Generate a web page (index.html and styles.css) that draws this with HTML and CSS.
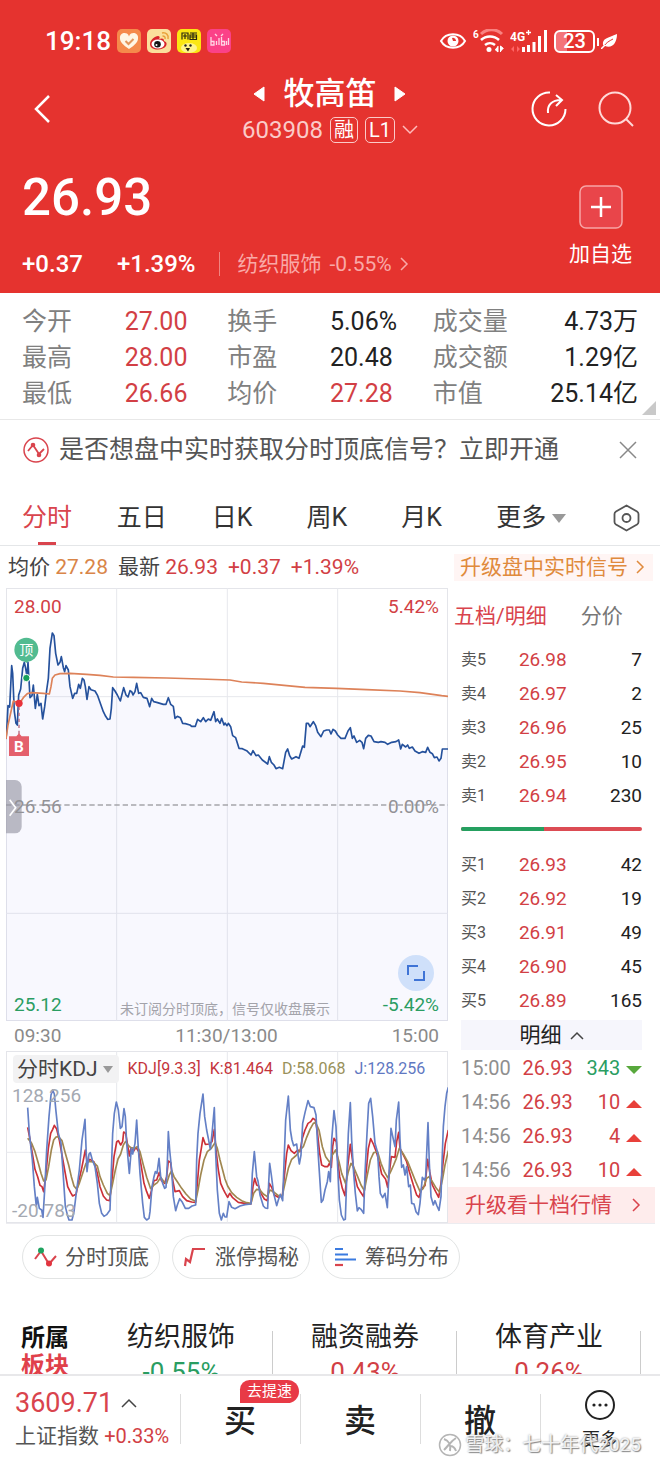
FILE: index.html
```html
<!DOCTYPE html>
<html lang="zh-CN">
<head>
    <meta charset="UTF-8">
    <meta name="viewport" content="width=device-width, initial-scale=1.0">
    <title>牧高笛 603908</title>
    <link rel="stylesheet" href="styles.css">
</head>
<body>
    <header class="top">
        <div class="status">
            <span class="clock">19:18</span>
            <svg class="app" viewBox="0 0 24 24"><rect width="24" height="24" rx="5" fill="#f58a4b"/><path d="M12 20C6 16 3 13 3 9.500a4.500 4.500 0 0 1 9-2 4.500 4.500 0 0 1 9 2C21 13 18 16 12 20z" fill="#fff6e4"/><path d="M8.500 12l3 3 5-5" fill="none" stroke="#e2965c" stroke-width="2"/></svg>
            <svg class="app" viewBox="0 0 24 24"><rect width="24" height="24" rx="5" fill="#fbdf9c"/><path d="M3 15c0-4 5-8 8-8 2 0 2 2 1 3 3-1 5-1 5 2 3 1 3 3 2 5-3 5-16 5-16-2z" fill="#d8232a"/><ellipse cx="11" cy="15" rx="6.500" ry="4.500" fill="#fff"/><circle cx="10.500" cy="15.300" r="3.300" fill="#161616"/><circle cx="9.500" cy="16" r="1" fill="#fff"/><path d="M15 4c4-1 7 2 6 6M15.500 7c2 0 3 1 2.500 3" fill="none" stroke="#e9a23c" stroke-width="1.500"/></svg>
            <svg class="app" viewBox="0 0 24 24"><rect width="24" height="24" rx="5" fill="#fbe713"/><ellipse cx="12" cy="19" rx="8" ry="5" fill="#fff48a"/><path d="M5 10.500V4h6v6.500M8 5v5M6 7h4M13 4h7M13 6h6.500v4.500H13zM16 4v6M13 8h6" fill="none" stroke="#2c2a12" stroke-width="1.200"/><circle cx="8.500" cy="16.500" r="1.200" fill="#222"/><circle cx="13.500" cy="16.500" r="1.200" fill="#222"/><path d="M8.500 19h4.500l-2 3.500z" fill="#221c10"/></svg>
            <svg class="app" viewBox="0 0 24 24"><rect width="24" height="24" rx="5" fill="#fb4188"/><path d="M4 8v8h3v-3.500H4M9.500 12v4M12 9v7M14.500 8v8h3v-3.500h-3M19.500 12v4M21.500 9v7M8 5l2 2M16 5l-2 2" fill="none" stroke="#ffd5e4" stroke-width="1.300"/></svg>
            <span class="status-gap"></span>
            <svg width="28" height="20" viewBox="0 0 28 20"><path d="M2 10C7 1 21 1 26 10 21 19 7 19 2 10z" fill="none" stroke="#fff" stroke-width="2"/><circle cx="14" cy="10" r="5.500" fill="#fff"/><path d="M13 7a3 3 0 0 1 4 3h-3z" fill="#e5332f"/></svg>
            <svg width="31" height="24" viewBox="0 0 31 24"><text x="0" y="9" class="tiny">6</text><path d="M8 5a15 15 0 0 1 21 0" fill="none" stroke="#f98280" stroke-width="3"/><path d="M8 11a13 13 0 0 1 18 0M12 16a8 8 0 0 1 10 0" fill="none" stroke="#fff" stroke-width="2.500"/><circle cx="16" cy="20.500" r="2.500" fill="#fff"/><path d="M25 17v6l-3-2.500M27.500 23v-6l3 2.500" fill="#fff" stroke="#fff"/></svg>
            <svg width="38" height="24" viewBox="0 0 38 24"><text x="0" y="12" class="net">4G</text><path d="M18.500 1v5M16 3.500h5" stroke="#fff" stroke-width="1.300"/><path d="M4 17v6l-3-3zM7 17v6l3-3z" fill="#f66"/><path d="M13.500 23v-5M18.500 23v-7M24 23v-10M29.500 23V7M35.500 23V1" stroke="#fff" stroke-width="3"/></svg>
            <span class="battery">23</span>
            <svg width="17" height="16" viewBox="0 0 17 16"><path d="M2 12C1 5 7 5 16 1c0 9-5 15-12 12z" fill="#fff"/><path d="M3 13C5 10 8 8 12 6" stroke="#e5332f" fill="none"/><path d="M0 16l4-4" stroke="#fff" stroke-width="1.500"/></svg>
        </div>

        <nav class="nav">
            <button class="icon-btn back" type="button" aria-label="返回"><svg width="18" height="30" viewBox="0 0 18 30"><path d="M16 2L3 15l13 13" fill="none" stroke="#fff" stroke-width="2.500"/></svg></button>
            <div class="stock">
                <h1 class="stock-name">
                    <svg width="12" height="16" viewBox="0 0 12 16"><path d="M11 1v14L1 8z" fill="#fff" stroke="#fff" stroke-linejoin="round"/></svg>
                    牧高笛
                    <svg width="12" height="16" viewBox="0 0 12 16"><path d="M1 1v14l10-7z" fill="#fff" stroke="#fff" stroke-linejoin="round"/></svg>
                </h1>
                <div class="stock-code">
                    603908
                    <span class="mark">融</span>
                    <span class="mark">L1</span>
                    <svg width="16" height="10" viewBox="0 0 16 10"><path d="M1 1l7 7 7-7" fill="none" stroke="#fbb" stroke-width="1.500"/></svg>
                </div>
            </div>
            <div class="nav-actions">
                <button class="icon-btn" type="button" aria-label="分享"><svg width="38" height="38" viewBox="0 0 38 38"><path d="M20 2.500A16.500 16.500 0 1 0 35.500 19" fill="none" stroke="#fff" stroke-width="2"/><path d="M18 23c-1-8 4-13 13-13M26 5l6 5-6 6" fill="none" stroke="#fff" stroke-width="2"/></svg></button>
                <button class="icon-btn" type="button" aria-label="搜索"><svg width="38" height="38" viewBox="0 0 38 38"><circle cx="18" cy="18" r="15.500" fill="none" stroke="#ffd9d8" stroke-width="2"/><path d="M29 29l7 7" stroke="#ffd9d8" stroke-width="2"/></svg></button>
            </div>
        </nav>

        <section class="quote">
            <div>
                <div class="price">26.93</div>
                <div class="change">
                    <span>+0.37</span>
                    <span class="change-rate">+1.39%</span>
                    <a class="industry" href="#">纺织服饰 <span class="industry-rate">-0.55%</span><svg width="9" height="14" viewBox="0 0 9 14"><path d="M1 1l6 6-6 6" fill="none" stroke="#f9a9a7" stroke-width="1.500"/></svg></a>
                </div>
            </div>
            <button class="add" type="button">
                <svg width="44" height="44" viewBox="0 0 44 44"><rect x="1" y="1" width="42" height="42" rx="6" fill="#e9454a" stroke="#f7a5a6" stroke-width="1.500"/><path d="M22 12v20M12 22h20" stroke="#fff" stroke-width="2.500"/></svg>
                加自选
            </button>
        </section>
    </header>

    <section class="stats">
        <table class="stats-table">
            <tr><th>今开</th><td class="up">27.00</td><th>换手</th><td>5.06%</td><th>成交量</th><td class="right">4.73万</td></tr>
            <tr><th>最高</th><td class="up">28.00</td><th>市盈</th><td>20.48</td><th>成交额</th><td class="right">1.29亿</td></tr>
            <tr><th>最低</th><td class="up">26.66</td><th>均价</th><td class="up">27.28</td><th>市值</th><td class="right">25.14亿</td></tr>
        </table>
        <svg class="corner" width="14" height="14" viewBox="0 0 14 14"><path d="M14 0v14H0z" fill="#c9c9c9"/></svg>
    </section>

    <section class="notice">
        <svg width="26" height="26" viewBox="0 0 26 26"><circle cx="13" cy="13" r="12" fill="none" stroke="#d9444d" stroke-width="1.500"/><path d="M5 14l5-6 6 9 5-5" fill="none" stroke="#d9444d" stroke-width="1.800"/><circle cx="10" cy="8" r="2.300" fill="#d9444d"/><circle cx="16" cy="18" r="2.300" fill="#d9444d"/></svg>
        <a class="notice-text" href="#">是否想盘中实时获取分时顶底信号？立即开通</a>
        <button class="icon-btn" type="button" aria-label="关闭"><svg width="18" height="18" viewBox="0 0 18 18"><path d="M1 1l16 16M17 1L1 17" stroke="#888" stroke-width="1.500"/></svg></button>
    </section>

    <nav class="tabs">
        <button class="tab active" type="button">分时</button>
        <button class="tab" type="button">五日</button>
        <button class="tab" type="button">日K</button>
        <button class="tab" type="button">周K</button>
        <button class="tab" type="button">月K</button>
        <button class="tab" type="button">更多 <svg width="14" height="9" viewBox="0 0 14 9"><path d="M0 0h14L7 9z" fill="#999"/></svg></button>
        <button class="tab" type="button" aria-label="设置"><svg width="27" height="28" viewBox="0 0 27 28"><path d="M13.500 1.500L24 7.500q1.500 1 1.500 2.500v8q0 1.500-1.500 2.500l-10.500 6L3 20.500Q1.500 19.500 1.500 18v-8Q1.500 8.500 3 7.500z" fill="none" stroke="#555" stroke-width="1.800"/><circle cx="13.500" cy="14" r="4" fill="none" stroke="#555" stroke-width="1.800"/></svg></button>
    </nav>

    <div class="summary">
        <span>均价 <b class="avg">27.28</b></span>
        <span>最新 <b class="up">26.93</b></span>
        <b class="up">+0.37</b>
        <b class="up">+1.39%</b>
        <a class="upgrade" href="#">升级盘中实时信号<svg width="9" height="14" viewBox="0 0 9 14"><path d="M1 1l6 6-6 6" fill="none" stroke="#e08a3c" stroke-width="1.500"/></svg></a>
    </div>

    <main class="market">
        <div class="charts">
            <div class="chart">
                <svg class="plot" viewBox="18 129 1326 1299">
                    <path class="grid" d="M350 129V1428M682 129V1428M1013 129V1428M18 455H1344M18 1105H1344"/>
                    <polyline class="line-price" points="10,1440 10,582 18,580 20,560 24,482 29,486 35,362 38,385 43,500 48,535 52,540 56,450 62,432 68,370 73,352 77,370 81,395 84,352 90,458 96,452 100,420 106,490 112,448 117,482 123,475 128,522 134,485 140,435 145,400 150,310 157,264 162,272 167,325 174,360 180,352 184,335 190,368 194,380 198,362 205,375 210,425 218,460 224,445 230,445 236,418 241,430 247,400 252,405 256,425 261,463 267,425 273,434 285,438 293,452 302,478 310,500 317,514 323,523 330,522 334,490 338,428 345,438 352,450 361,468 371,428 378,450 384,456 390,437 395,440 399,450 405,440 410,415 416,445 422,443 430,457 441,460 449,485 455,460 461,470 470,472 480,475 490,478 498,478 505,458 512,478 520,484 525,520 532,514 541,518 548,535 556,536 570,540 575,544 586,544 593,523 602,530 610,518 617,530 625,522 632,526 642,500 647,530 652,522 660,535 665,520 672,540 675,534 681,542 685,535 692,545 698,572 707,578 717,610 727,611 740,617 753,630 759,617 768,632 775,630 787,645 803,657 808,635 814,652 822,660 828,671 838,667 848,671 857,622 863,612 869,632 875,642 888,635 897,640 908,603 913,607 919,535 925,535 930,545 940,530 947,542 953,562 963,575 971,558 980,555 988,555 993,567 999,553 1006,558 1013,570 1023,580 1035,580 1044,558 1051,548 1057,580 1062,573 1070,592 1079,586 1086,592 1091,611 1097,580 1105,571 1113,573 1122,590 1135,592 1143,590 1155,592 1163,598 1175,592 1188,590 1196,585 1202,612 1207,598 1217,606 1223,600 1228,610 1237,606 1245,618 1257,625 1267,620 1277,622 1283,607 1290,622 1297,626 1303,638 1311,636 1317,648 1323,640 1327,612 1352,612 1352,1440"/>
                    <polyline class="line-avg" points="18,582 24,540 34,495 40,468 50,472 62,470 70,458 82,446 95,443 130,445 148,447 153,425 157,400 165,390 180,386 210,385 260,388 300,391 340,396 400,397 500,399 600,402 690,405 725,411 790,415 860,422 915,427 1010,430 1100,434 1200,438 1260,443 1325,452 1344,454"/>
                    <path class="base" d="M18 780H1344"/>
                    <path d="M57 485V570" stroke="#b66a80" stroke-width="4" stroke-dasharray="10 8"/>
                    <circle cx="57" cy="475" r="11" fill="#e8333b"/>
                    <circle cx="79" cy="399" r="11" fill="#17a05b" stroke="#fff" stroke-width="3"/>
                    <path d="M66 342h26l-13 12z" fill="#52bb90"/>
                    <circle cx="79" cy="314" r="36" fill="#52bb90"/>
                    <text x="79" y="329" class="top-mark">顶</text>
                    <path d="M27 574h22l8-9 8 9h22v59H27z" fill="#e4606c"/>
                    <text x="57" y="620" class="buy-mark">B</text>
                    <rect x="0" y="705" width="65" height="160" rx="20" fill="#9797a5" fill-opacity=".65"/>
                    <path d="M29 764l18 24-18 24" fill="none" stroke="#fff" stroke-width="5"/>
                </svg>
                <span class="tag tl up">28.00</span>
                <span class="tag tr up">5.42%</span>
                <span class="tag ml">26.56</span>
                <span class="tag mr">0.00%</span>
                <span class="tag bl down">25.12</span>
                <span class="tag br down">-5.42%</span>
                <span class="tag hint">未订阅分时顶底，信号仅收盘展示</span>
                <button class="expand" type="button" aria-label="全屏"><svg width="36" height="36" viewBox="0 0 36 36"><circle cx="18" cy="18" r="18" fill="#cfe0fa"/><path d="M10 20v-9h10M26 16v9H16" fill="none" stroke="#3f74d6" stroke-width="2"/></svg></button>
            </div>

            <div class="axis"><span>09:30</span><span>11:30/13:00</span><span>15:00</span></div>

            <div class="chart kdj">
                <svg class="plot" viewBox="18 -87 1326 516">
                    <path class="grid" d="M350 -87V429M682 -87V429M1013 -87V429M18 217H1344"/>
                    <polyline class="line-k" points="83,142 90,178 97,220 105,268 113,290 120,316 126,320 131,335 137,290 145,205 152,160 158,148 163,136 170,147 178,180 186,225 194,270 203,320 212,338 218,348 228,343 236,305 245,265 256,210 262,248 270,238 282,246 292,280 300,320 310,348 320,360 329,362 336,300 342,230 350,186 355,182 362,195 368,185 371,156 377,160 382,190 388,228 393,203 400,215 408,202 416,215 424,260 432,310 440,335 448,355 455,330 462,302 470,300 478,277 484,302 494,310 500,290 505,243 512,248 518,300 525,335 538,332 548,350 560,362 575,366 587,367 592,310 598,240 604,205 609,173 616,193 628,192 636,185 643,148 648,210 655,270 662,310 670,328 675,338 683,352 689,340 697,352 715,367 735,370 753,372 759,320 764,295 770,315 776,318 783,340 793,357 802,362 808,310 815,322 823,345 835,352 847,348 855,270 860,220 865,195 873,212 883,220 893,210 900,215 907,175 915,150 924,130 932,125 939,115 946,120 952,155 959,220 965,255 975,260 983,260 988,250 994,262 998,200 1002,175 1009,185 1013,240 1019,290 1027,325 1035,347 1043,260 1051,193 1056,230 1063,280 1072,320 1082,337 1091,350 1099,270 1105,205 1112,176 1120,192 1130,218 1137,245 1145,282 1157,298 1163,322 1169,270 1174,230 1185,232 1190,185 1196,157 1200,205 1210,225 1220,245 1228,275 1240,315 1250,345 1257,352 1265,325 1275,317 1283,238 1289,275 1297,315 1307,335 1316,352 1323,310 1329,250 1336,190 1345,150"/>
                    <polyline class="line-d" points="83,175 95,190 105,215 115,250 123,280 131,303 138,300 146,260 154,210 161,180 168,171 175,170 186,182 196,220 206,255 214,290 222,318 230,328 238,310 248,280 258,250 266,244 280,246 292,258 300,290 310,315 322,340 330,347 338,310 346,270 354,237 362,222 370,195 377,184 384,195 392,203 404,205 412,200 420,215 430,255 440,292 452,326 462,315 472,308 482,292 492,305 500,310 508,285 515,272 522,290 532,305 545,325 558,342 572,357 587,364 594,330 602,285 612,240 622,215 634,205 645,188 652,205 660,240 675,297 683,318 695,338 710,352 725,362 740,368 753,370 761,340 770,328 780,330 790,342 802,350 810,330 820,335 835,347 847,347 855,310 865,265 875,238 890,225 900,210 910,200 920,172 930,148 940,130 947,128 957,150 967,200 977,230 990,248 997,225 1007,210 1017,245 1025,280 1037,311 1045,275 1053,250 1061,262 1073,290 1083,315 1093,332 1101,290 1111,240 1121,218 1133,216 1143,250 1153,275 1163,293 1172,275 1181,255 1189,235 1198,205 1210,222 1223,245 1235,275 1247,305 1260,334 1270,325 1280,295 1287,290 1297,305 1309,325 1319,337 1327,300 1335,255 1345,212"/>
                    <polyline class="line-j" points="83,83 88,160 97,240 103,320 109,380 112,352 118,385 125,390 129,412 134,330 140,210 147,110 153,45 158,30 163,42 168,95 175,160 183,190 190,290 196,380 203,408 207,420 216,420 222,395 230,330 238,270 246,180 255,118 258,200 261,275 267,222 271,218 277,240 285,260 292,310 298,370 305,400 312,409 320,404 330,390 333,300 338,160 343,100 349,66 355,90 361,145 366,140 372,86 376,110 380,190 388,280 394,205 398,222 405,190 410,120 414,190 420,280 428,370 433,412 440,420 447,415 450,395 456,320 462,290 466,275 471,280 477,235 482,290 488,310 494,325 498,322 502,250 505,155 509,210 515,270 520,350 527,392 532,375 539,356 546,365 556,385 566,385 576,378 587,375 590,240 594,160 600,100 609,42 614,110 620,150 625,175 631,208 637,150 643,83 647,220 652,330 658,400 664,420 670,400 675,411 680,411 687,365 695,382 705,386 720,378 735,374 753,372 757,280 763,215 770,290 774,303 780,345 790,378 796,384 803,385 806,310 809,250 814,285 821,340 830,377 835,360 841,343 848,362 852,250 857,120 865,48 871,150 876,180 881,197 890,192 894,225 898,252 903,225 908,130 915,98 924,62 931,80 942,83 948,105 952,180 957,260 964,367 969,360 975,330 982,305 986,275 991,305 995,180 1002,92 1008,140 1013,260 1018,360 1024,405 1031,420 1036,418 1040,300 1045,160 1051,68 1055,180 1061,280 1066,340 1072,393 1077,383 1083,388 1091,400 1095,280 1101,160 1106,70 1112,55 1118,110 1125,190 1133,218 1137,290 1141,340 1148,353 1155,340 1162,383 1167,280 1173,145 1180,178 1185,200 1189,120 1196,66 1200,180 1205,262 1210,255 1215,285 1220,260 1226,320 1231,315 1235,370 1242,372 1248,395 1255,404 1260,370 1267,292 1273,300 1277,290 1284,128 1288,250 1293,350 1300,375 1305,362 1311,378 1317,391 1323,350 1326,250 1330,140 1335,80 1340,40 1345,22"/>
                </svg>
                <div class="kdj-bar">
                    <button class="kdj-select" type="button">分时KDJ <svg width="10" height="7" viewBox="0 0 10 7"><path d="M0 0h10L5 7z" fill="#999"/></svg></button>
                    <span class="k">KDJ[9.3.3]</span>
                    <span class="k">K:81.464</span>
                    <span class="d">D:58.068</span>
                    <span class="j">J:128.256</span>
                </div>
                <span class="tag kdj-max">128.256</span>
                <span class="tag kdj-min">-20.783</span>
            </div>
        </div>

        <aside class="book">
            <div class="book-tabs">
                <button class="book-tab active" type="button">五档/明细</button>
                <button class="book-tab" type="button">分价</button>
            </div>
            <table class="levels">
                <tr><th>卖5</th><td class="up">26.98</td><td>7</td></tr>
                <tr><th>卖4</th><td class="up">26.97</td><td>2</td></tr>
                <tr><th>卖3</th><td class="up">26.96</td><td>25</td></tr>
                <tr><th>卖2</th><td class="up">26.95</td><td>10</td></tr>
                <tr><th>卖1</th><td class="up">26.94</td><td>230</td></tr>
            </table>
            <div class="ratio"><span class="ratio-buy" style="width: 46%"></span></div>
            <table class="levels">
                <tr><th>买1</th><td class="up">26.93</td><td>42</td></tr>
                <tr><th>买2</th><td class="up">26.92</td><td>19</td></tr>
                <tr><th>买3</th><td class="up">26.91</td><td>49</td></tr>
                <tr><th>买4</th><td class="up">26.90</td><td>45</td></tr>
                <tr><th>买5</th><td class="up">26.89</td><td>165</td></tr>
            </table>
            <button class="detail" type="button">明细 <svg width="14" height="9" viewBox="0 0 14 9"><path d="M1 8l6-6 6 6" fill="none" stroke="#444" stroke-width="1.500"/></svg></button>
            <table class="trades">
                <tr><th>15:00</th><td class="up">26.93</td><td class="down">343</td><td><svg width="16" height="8" viewBox="0 0 16 8"><path d="M0 0h16L8 8z" fill="#58a83c"/></svg></td></tr>
                <tr><th>14:56</th><td class="up">26.93</td><td class="up">10</td><td><svg width="16" height="8" viewBox="0 0 16 8"><path d="M0 8h16L8 0z" fill="#e8403a"/></svg></td></tr>
                <tr><th>14:56</th><td class="up">26.93</td><td class="up">4</td><td><svg width="16" height="8" viewBox="0 0 16 8"><path d="M0 8h16L8 0z" fill="#e8403a"/></svg></td></tr>
                <tr><th>14:56</th><td class="up">26.93</td><td class="up">10</td><td><svg width="16" height="8" viewBox="0 0 16 8"><path d="M0 8h16L8 0z" fill="#e8403a"/></svg></td></tr>
            </table>
            <a class="more-levels" href="#">升级看十档行情 <svg width="9" height="14" viewBox="0 0 9 14"><path d="M1 1l6 6-6 6" fill="none" stroke="#d9444d" stroke-width="1.500"/></svg></a>
        </aside>
    </main>

    <div class="tools">
        <button class="tool" type="button"><svg width="24" height="22" viewBox="0 0 24 22"><path d="M2 13l6-8" stroke="#d9444d" stroke-width="2"/><path d="M8 5l8 13 7-8" fill="none" stroke="#d9444d" stroke-width="2"/><circle cx="8" cy="4.500" r="3" fill="#1fa35f"/><circle cx="16" cy="17.500" r="3" fill="#e2343f"/></svg>分时顶底</button>
        <button class="tool" type="button"><svg width="24" height="22" viewBox="0 0 24 22"><path d="M2 20l1-7 4 3 3-13h12" fill="none" stroke="#d9444d" stroke-width="2.200"/></svg>涨停揭秘</button>
        <button class="tool" type="button"><svg width="24" height="22" viewBox="0 0 24 22"><path d="M2 3h8M2 8.500h13M2 13.500h21" stroke="#3b7be0" stroke-width="2.200"/><path d="M2 19h8" stroke="#d9444d" stroke-width="2.200"/></svg>筹码分布</button>
    </div>

    <section class="sectors">
        <h2 class="sectors-title">所属<br><span class="sectors-sub">板块</span></h2>
        <a class="sector" href="#">纺织服饰<span class="sector-rate down">-0.55%</span></a>
        <a class="sector" href="#">融资融券<span class="sector-rate up">0.43%</span></a>
        <a class="sector" href="#">体育产业<span class="sector-rate up">0.26%</span></a>
    </section>

    <footer class="bottom">
        <a class="index" href="#">
            <span class="index-value">3609.71 <svg width="16" height="10" viewBox="0 0 16 10"><path d="M1 9l7-7 7 7" fill="none" stroke="#444" stroke-width="1.500"/></svg></span>
            <span class="index-name">上证指数 <span class="index-rate">+0.33%</span></span>
        </a>
        <button class="trade" type="button">买<span class="speed">去提速</span></button>
        <button class="trade" type="button">卖</button>
        <button class="trade" type="button">撤</button>
        <button class="trade more" type="button"><svg width="32" height="32" viewBox="0 0 32 32"><circle cx="16" cy="16" r="14" fill="none" stroke="#222" stroke-width="2"/><circle cx="10" cy="16" r="1.600" fill="#222"/><circle cx="16" cy="16" r="1.600" fill="#222"/><circle cx="22" cy="16" r="1.600" fill="#222"/></svg>更多</button>
        <div class="watermark"><svg width="24" height="24" viewBox="0 0 24 24"><circle cx="12" cy="12" r="10.500" fill="#fff" fill-opacity=".6" stroke="#b5b5b5" stroke-width="1.500"/><path d="M6 6c5 2 7 5 6 12M18 5c-5 3-7 7-12 12M12 13c3 0 5 2 6 5" fill="none" stroke="#b5b5b5" stroke-width="2"/></svg>雪球：七十年代2025</div>
    </footer>
</body>
</html>
```

FILE: styles.css
```css
* {
    box-sizing: border-box;
}
body {
    margin: 0;
    min-height: 100vh;
    font-family: Roboto, "Noto Sans CJK SC", sans-serif;
    font-size: 21px;
    line-height: 30px;
    color: #222;
    background: #fff;
}
button {
    padding: 0;
    border: 0;
    background: none;
    font: inherit;
    color: inherit;
    cursor: pointer;
}
a {
    color: inherit;
    text-decoration: none;
}
svg {
    flex: none;
}
table {
    width: 100%;
    table-layout: fixed;
    border-collapse: collapse;
}
th, td {
    padding: 0;
    text-align: left;
    font-weight: 400;
}
b {
    font-weight: 400;
}
.up {
    color: #d23f45;
}
.down {
    color: #2a9d62;
}
.avg {
    color: #d98548;
}
.icon-btn {
    display: flex;
}

/* red header */
.top {
    background: #e5332f;
    color: #fff;
}
.status {
    display: flex;
    align-items: center;
    gap: 6px;
    padding: 26px 42px 0 45px;
}
.clock {
    font-size: 26px;
    font-weight: 500;
}
.app {
    width: 24px;
    height: 24px;
}
.status-gap {
    flex: 1;
}
.tiny {
    font-size: 10px;
    font-weight: 700;
    fill: #fff;
}
.net {
    font-size: 12px;
    font-weight: 700;
    fill: #fff;
}
.battery {
    position: relative;
    width: 41px;
    border: 2px solid #fff;
    border-radius: 6px;
    background: linear-gradient(to right, #f4747a 30%, transparent 30%);
    font-size: 20px;
    line-height: 19px;
    text-align: center;
    font-weight: 500;
}
.battery::after {
    content: "";
    position: absolute;
    right: -6px;
    top: 6px;
    width: 2px;
    height: 8px;
    background: #fff;
}
.nav {
    display: grid;
    grid-template-columns: 1fr auto 1fr;
    align-items: center;
    padding: 18px 25px 0;
}
.back {
    margin-left: 8px;
}
.stock {
    display: flex;
    flex-direction: column;
    align-items: center;
    gap: 2px;
}
.stock-name {
    display: flex;
    align-items: center;
    gap: 18px;
    margin: 0;
    font-size: 31px;
    line-height: 40px;
    font-weight: 500;
}
.stock-code {
    display: flex;
    align-items: center;
    gap: 7px;
    font-size: 24px;
    line-height: 28px;
    color: #fbcbc9;
}
.mark {
    padding: 0 3px;
    border: 1px solid #fbcbc9;
    border-radius: 5px;
    font-size: 20px;
    line-height: 24px;
    color: #fff;
}
.nav-actions {
    display: flex;
    justify-content: flex-end;
    gap: 29px;
}
.quote {
    display: flex;
    justify-content: space-between;
    align-items: flex-start;
    padding: 24px 28px 14px 22px;
}
.price {
    font-size: 51px;
    line-height: 60px;
    font-weight: 500;
}
.change {
    display: flex;
    align-items: center;
    margin-top: 21px;
    font-size: 24px;
    font-weight: 500;
}
.change-rate {
    margin-left: 34px;
}
.industry {
    display: flex;
    align-items: center;
    gap: 8px;
    margin-left: 23px;
    padding-left: 18px;
    border-left: 1px solid #f08581;
    font-size: 21px;
    line-height: 24px;
    font-weight: 400;
    color: #f9a9a7;
}
.add {
    display: flex;
    flex-direction: column;
    align-items: center;
    gap: 11px;
    margin-top: 17px;
    line-height: 28px;
}

/* key figures */
.stats {
    position: relative;
    padding: 11px 22px 7px;
    border-bottom: 1px solid #e8e8e8;
    font-size: 25px;
    line-height: 36px;
}
.stats-table th {
    color: #808080;
}
.stats-table .right {
    text-align: right;
}
.corner {
    position: absolute;
    right: 4px;
    bottom: 4px;
}
.notice {
    display: flex;
    align-items: center;
    gap: 10px;
    padding: 15px 23px;
    font-size: 25px;
    color: #555;
}
.notice-text {
    flex: 1;
    white-space: nowrap;
}

/* period tabs */
.tabs {
    display: grid;
    grid-template-columns: repeat(5, 95fr) 117fr 27px;
    padding: 23px 20px 0 22px;
    border-bottom: 1px solid #e4e6e8;
}
.tab {
    justify-self: start;
    display: flex;
    align-items: center;
    gap: 6px;
    padding-bottom: 12px;
    font-size: 25px;
    line-height: 30px;
    color: #333;
}
.tab.active {
    color: #d9444d;
    background: linear-gradient(#d9444d, #d9444d) center bottom / 18px 3px no-repeat;
}
.summary {
    display: flex;
    align-items: center;
    gap: 10px;
    height: 42px;
    padding: 0 7px 0 8px;
    color: #444;
    white-space: nowrap;
}
.upgrade {
    display: flex;
    align-items: center;
    gap: 8px;
    margin-left: auto;
    padding: 0 8px 0 6px;
    background: #fff5f4;
    line-height: 27px;
    color: #e08a3c;
}

/* charts and order book */
.market {
    display: flex;
    margin: 0 5px 0 6px;
    border-bottom: 1px solid #ececf0;
}
.charts {
    flex: 442;
    min-width: 0;
}
.chart {
    position: relative;
    box-shadow: inset 0 0 0 1px #e4e5ea;
}
.plot {
    display: block;
    width: 100%;
    height: auto;
}
.grid {
    fill: none;
    stroke: #e7e8ed;
    stroke-width: 3;
}
.base {
    stroke: #a5a5aa;
    stroke-width: 4;
    stroke-dasharray: 16 9;
}
.line-price {
    fill: rgba(110, 110, 230, .05);
    stroke: #25519c;
    stroke-width: 5;
    stroke-linejoin: round;
}
.line-avg, .line-k, .line-d, .line-j {
    fill: none;
    stroke: #dd8259;
    stroke-width: 5;
    stroke-linejoin: round;
}
.line-k {
    stroke: #cc3038;
}
.line-d {
    stroke: #a08750;
}
.line-j {
    stroke: #6480c6;
}
.top-mark {
    font-size: 42px;
    fill: #fff;
    text-anchor: middle;
}
.buy-mark {
    font-size: 46px;
    font-weight: 700;
    fill: #fff;
    text-anchor: middle;
}
.tag {
    position: absolute;
    font-size: 19px;
    line-height: 24px;
}
.tl, .ml, .bl {
    left: 8px;
}
.tr, .mr, .br {
    right: 9px;
}
.tl, .tr {
    top: 7px;
}
.ml, .mr {
    top: 50%;
    margin-top: -10px;
    color: #929296;
}
.bl, .br {
    bottom: 4px;
}
.hint {
    left: 114px;
    bottom: 0;
    font-size: 14px;
    color: #a3a3aa;
    white-space: nowrap;
}
.expand {
    position: absolute;
    right: 14px;
    bottom: 30px;
    display: flex;
}
.axis {
    display: flex;
    justify-content: space-between;
    padding: 0 9px 0 8px;
    font-size: 19px;
    color: #8a8a8a;
}
.kdj-bar {
    position: absolute;
    top: 3px;
    left: 7px;
    display: flex;
    align-items: center;
    gap: 9px;
    font-size: 16px;
    white-space: nowrap;
}
.kdj-select {
    display: flex;
    align-items: center;
    gap: 5px;
    padding: 0 6px 0 4px;
    border-radius: 4px;
    background: #f2f2f3;
    font-size: 21px;
    line-height: 28px;
    color: #444;
}
.k {
    color: #c4343c;
}
.d {
    color: #99915a;
}
.j {
    color: #5f78c2;
}
.kdj-max, .kdj-min {
    left: 6px;
    color: #a4a9b2;
}
.kdj-max {
    top: 33px;
}
.kdj-min {
    bottom: 0;
}
.book {
    flex: 207;
    min-width: 0;
}
.book-tabs {
    display: flex;
    gap: 34px;
    padding: 13px 0 12px 6px;
    white-space: nowrap;
}
.book-tab {
    color: #777;
}
.book-tab.active {
    color: #d9444d;
}
.levels, .trades {
    width: calc(100% - 26px);
    margin: 0 13px;
    font-size: 19px;
    line-height: 34px;
}
.levels th {
    width: 32%;
    font-size: 16px;
    color: #555;
}
.levels td:last-child {
    text-align: right;
}
.ratio {
    display: flex;
    margin: 14px 13px 17px;
    border-radius: 2px;
    background: #dc4c54;
}
.ratio-buy {
    height: 4px;
    border-radius: 2px 0 0 2px;
    background: #25a060;
}
.detail {
    display: flex;
    align-items: center;
    justify-content: center;
    gap: 8px;
    width: calc(100% - 26px);
    margin: 2px 13px 1px;
    background: #f6f6fc;
}
.trades {
    font-size: 20px;
}
.trades th {
    width: 34%;
    color: #8f8f8f;
}
.trades td:nth-child(3) {
    text-align: right;
}
.trades td:last-child {
    width: 12%;
    text-align: right;
}
.trades svg {
    display: inline-block;
    vertical-align: middle;
}
.more-levels {
    display: flex;
    align-items: center;
    justify-content: space-between;
    padding: 0 14px 0 17px;
    background: #feecec;
    line-height: 36px;
    color: #d9444d;
}

/* shortcuts */
.tools {
    display: flex;
    gap: 12px;
    padding: 11px 22px 0;
}
.tool {
    display: flex;
    align-items: center;
    gap: 8px;
    padding: 0 10px;
    border: 1px solid #e2e4e4;
    border-radius: 22px;
    line-height: 42px;
    color: #555;
}
.sectors {
    display: flex;
    padding: 40px 19px 0 0;
}
.sectors-title {
    width: 89px;
    margin: 5px 0 0;
    padding-left: 21px;
    font-size: 24px;
    line-height: 28px;
    font-weight: 700;
    color: #111;
}
.sectors-sub {
    color: #e0404a;
}
.sector {
    flex: 1;
    display: flex;
    flex-direction: column;
    align-items: center;
    background: linear-gradient(#ccc, #ccc) right 12px / 1px 60px no-repeat;
    font-size: 27px;
    line-height: 36px;
}
.sector-rate {
    font-size: 26px;
    line-height: 34px;
}

/* bottom bar */
.bottom {
    position: fixed;
    left: 0;
    right: 0;
    bottom: 0;
    display: grid;
    grid-template-columns: 180fr repeat(4, 120fr);
    height: 91px;
    border-top: 2px solid #e8e8ea;
    background: #fff;
}
.index {
    display: flex;
    flex-direction: column;
    padding: 10px 0 0 15px;
    white-space: nowrap;
}
.index-value {
    display: flex;
    align-items: center;
    gap: 8px;
    font-size: 27px;
    line-height: 34px;
    color: #d9444d;
}
.index-name {
    line-height: 32px;
    color: #555;
}
.index-rate {
    font-size: 20px;
    color: #d23f45;
}
.trade {
    position: relative;
    background: linear-gradient(#ddd, #ddd) left 18px / 1px 50px no-repeat;
    font-size: 32px;
    font-weight: 500;
}
.speed {
    position: absolute;
    left: 50%;
    top: 4px;
    padding: 0 7px;
    border-radius: 10px 12px 12px 0;
    background: #e83a46;
    font-size: 15px;
    line-height: 23px;
    font-weight: 400;
    color: #fff;
    white-space: nowrap;
}
.more {
    display: flex;
    flex-direction: column;
    align-items: center;
    gap: 4px;
    padding-top: 13px;
    font-size: 18px;
    font-weight: 400;
}
.watermark {
    position: absolute;
    right: 19px;
    bottom: 5px;
    display: flex;
    align-items: center;
    gap: 3px;
    font-size: 19px;
    color: rgba(255, 255, 255, .85);
    text-shadow: 1px 1px 1px #888, 0 0 2px #999;
}
```
